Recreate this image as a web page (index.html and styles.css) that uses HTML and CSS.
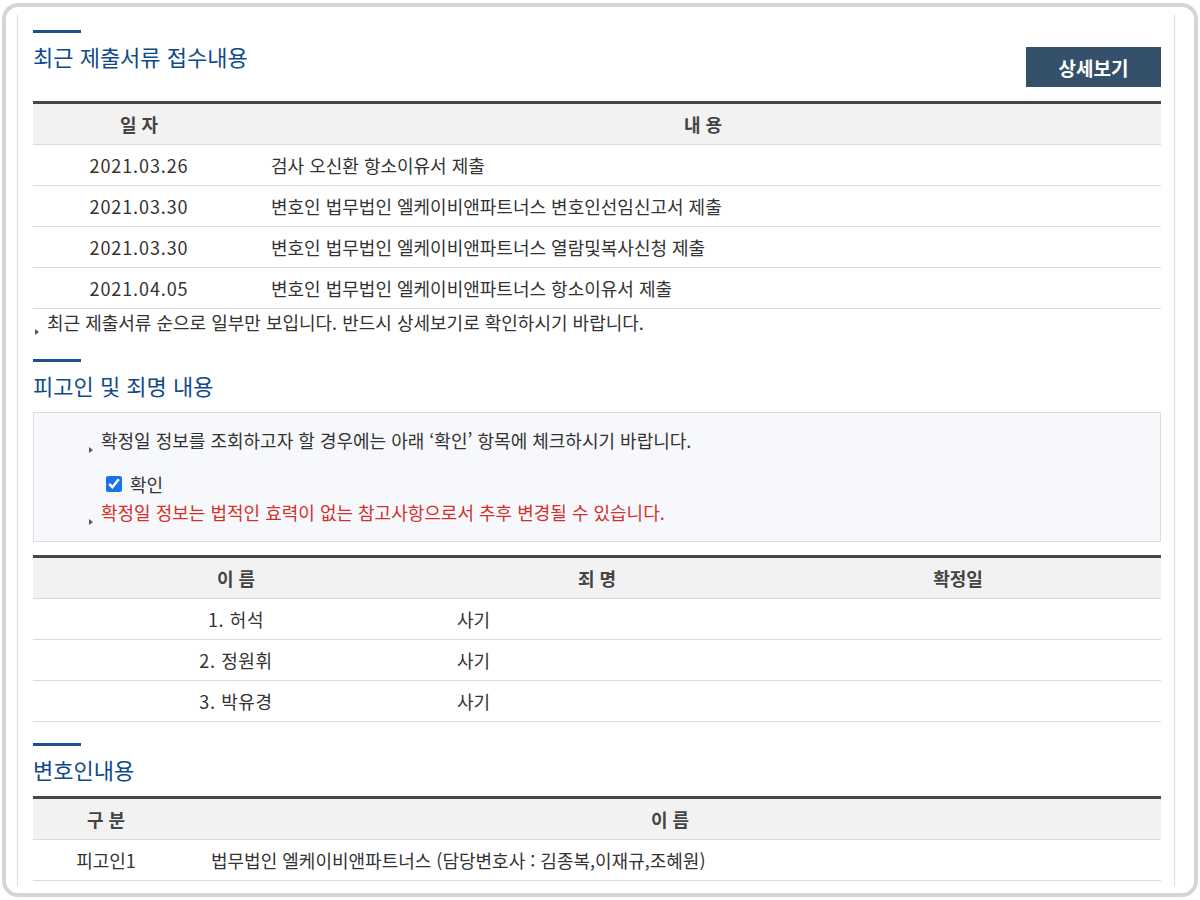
FILE: index.html
```html
<!DOCTYPE html>
<html lang="ko">
<head>
<meta charset="utf-8">
<link rel="stylesheet" href="styles.css">
</head>
<body>
<div class="frame">
  <div class="inner">
    <div class="sec-head">
      <div class="sec-title-wrap">
        <div class="bar"></div>
        <h2 class="sec-title">최근 제출서류 접수내용</h2>
      </div>
      <button class="btn-detail" type="button">상세보기</button>
    </div>
    <table class="tbl">
      <colgroup><col class="c-date"><col></colgroup>
      <thead><tr><th>일 자</th><th>내 용</th></tr></thead>
      <tbody>
        <tr><td class="center num">2021.03.26</td><td class="left pad-doc">검사 오신환 항소이유서 제출</td></tr>
        <tr><td class="center num">2021.03.30</td><td class="left pad-doc">변호인 법무법인 엘케이비앤파트너스 변호인선임신고서 제출</td></tr>
        <tr><td class="center num">2021.03.30</td><td class="left pad-doc">변호인 법무법인 엘케이비앤파트너스 열람및복사신청 제출</td></tr>
        <tr><td class="center num">2021.04.05</td><td class="left pad-doc">변호인 법무법인 엘케이비앤파트너스 항소이유서 제출</td></tr>
      </tbody>
    </table>
    <p class="note"><span class="tri"></span>최근 제출서류 순으로 일부만 보입니다. 반드시 상세보기로 확인하시기 바랍니다.</p>

    <div class="sec-title-wrap sec2">
      <div class="bar"></div>
      <h2 class="sec-title">피고인 및 죄명 내용</h2>
    </div>
    <div class="info-box">
      <p class="info-line"><span class="tri"></span>확정일 정보를 조회하고자 할 경우에는 아래 ‘확인’ 항목에 체크하시기 바랍니다.</p>
      <label class="chk"><input type="checkbox" checked><span>확인</span></label>
      <p class="info-line red"><span class="tri"></span>확정일 정보는 법적인 효력이 없는 참고사항으로서 추후 변경될 수 있습니다.</p>
    </div>
    <table class="tbl tbl2">
      <colgroup><col class="c-name"><col class="c-crime"><col></colgroup>
      <thead><tr><th>이 름</th><th>죄 명</th><th>확정일</th></tr></thead>
      <tbody>
        <tr><td class="center num-s">1. 허석</td><td class="left pad-crime">사기</td><td></td></tr>
        <tr><td class="center num-s">2. 정원휘</td><td class="left pad-crime">사기</td><td></td></tr>
        <tr><td class="center num-s">3. 박유경</td><td class="left pad-crime">사기</td><td></td></tr>
      </tbody>
    </table>

    <div class="sec-title-wrap sec3">
      <div class="bar"></div>
      <h2 class="sec-title">변호인내용</h2>
    </div>
    <table class="tbl tbl3">
      <colgroup><col class="c-kind"><col></colgroup>
      <thead><tr><th>구 분</th><th>이 름</th></tr></thead>
      <tbody>
        <tr><td class="center">피고인1</td><td class="left pad-law">법무법인 엘케이비앤파트너스 (담당변호사 : 김종복,이재규,조혜원)</td></tr>
      </tbody>
    </table>
  </div>
</div>
</body>
</html>
```

FILE: styles.css
```css
* { box-sizing: border-box; }
html, body { margin: 0; padding: 0; background: #fff; }
body {
  font-family: "Noto Sans CJK KR", "Noto Sans", sans-serif;
  color: #333;
  font-size: 18px;
  overflow: hidden;
}
.frame {
  margin: 3px 2px;
  height: 894px;
  border: 4px solid #d5d5d5;
  border-radius: 16px;
  padding: 8px 19px 0 11px;
  background: #fff;
}
.inner {
  height: 871px;
  border-left: 1px solid #dcdcdc;
  border-right: 1px solid #dcdcdc;
  padding: 15px 13px 0 15px;
  overflow: hidden;
}
.sec-head {
  display: flex;
  justify-content: space-between;
  align-items: flex-start;
  margin-bottom: 14px;
}
.bar {
  width: 48px;
  height: 3px;
  background: #1c4f8e;
}
.sec-title {
  margin: 8px 0 0;
  font-size: 22px;
  font-weight: 400;
  line-height: 30px;
  color: #0f4a8c;
}
.btn-detail {
  width: 135px;
  height: 40px;
  margin-top: 17px;
  border: 0;
  background: #34506b;
  color: #fff;
  font-family: inherit;
  font-size: 19px;
  font-weight: 700;
  padding: 0;
}
.tbl {
  width: 100%;
  border-collapse: collapse;
  border-top: 3px solid #464646;
  table-layout: fixed;
}
.tbl th {
  height: 42px;
  background: #f2f2f2;
  font-weight: 700;
  font-size: 18px;
  color: #444;
  border-bottom: 1px solid #dcdcdc;
  padding: 0;
  text-align: center;
}
.tbl td {
  height: 41px;
  border-bottom: 1px solid #dcdcdc;
  padding: 0;
  font-size: 18px;
  color: #333;
}
.num { letter-spacing: 0.9px; }
.num-s { letter-spacing: 0.6px; }
.c-date { width: 212px; }
.center { text-align: center; }
.left { text-align: left; }
.pad-doc { padding-left: 26px !important; }
.c-name { width: 406px; }
.c-crime { width: 316px; }
.pad-crime { padding-left: 18px !important; }
.c-kind { width: 146px; }
.pad-law { padding-left: 32px !important; }

.tri {
  display: inline-block;
  width: 0;
  height: 0;
  border-top: 3px solid transparent;
  border-bottom: 3px solid transparent;
  border-left: 4px solid #555;
  margin: 0 8px 0 2px;
  vertical-align: -5px;
}
.note {
  margin: 1px 0 0;
  line-height: 24px;
  font-size: 18px;
}
.sec2 { margin-top: 24px; margin-bottom: 12px; }
.sec3 { margin-top: 21px; margin-bottom: 12px; }
.info-box {
  background: #f7f8fb;
  border: 1px solid #dcdcdc;
  height: 130px;
  padding: 15px 0 0 53px;
  margin-bottom: 13px;
}
.info-line {
  margin: 0;
  line-height: 24px;
  font-size: 18px;
}
.info-line.red { color: #d2312b; }
.chk {
  display: flex;
  align-items: center;
  height: 24px;
  margin: 19px 0 4px 19px;
  font-size: 18px;
}
.chk input {
  width: 16px;
  height: 16px;
  margin: 0 8px 0 0;
  accent-color: #1a73e8;
}
```
